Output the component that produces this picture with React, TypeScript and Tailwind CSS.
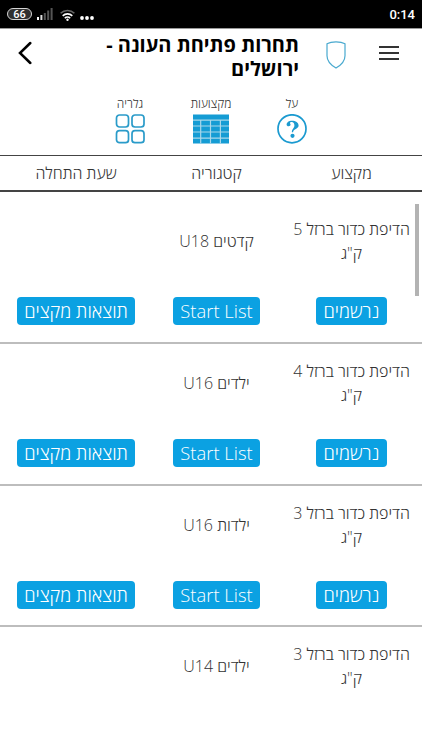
import { useState } from "react";

interface EventRow {
  id: number;
  name: string;
  unit: string;
  category: string;
}

const events: EventRow[] = [
  { id: 1, name: "הדיפת כדור ברזל 5", unit: 'ק"ג', category: "קדטים U18" },
  { id: 2, name: "הדיפת כדור ברזל 4", unit: 'ק"ג', category: "ילדים U16" },
  { id: 3, name: "הדיפת כדור ברזל 3", unit: 'ק"ג', category: "ילדות U16" },
  { id: 4, name: "הדיפת כדור ברזל 3", unit: 'ק"ג', category: "ילדים U14" },
];

const columns = "grid grid-cols-[141px_129px_152px]";

const StatusBar = () => (
  <div dir="ltr" className="flex h-7 shrink-0 items-center bg-black pl-[7px] pr-[7px] text-white font-['Roboto',sans-serif]">
    <div className="flex h-3 w-[25px] items-center justify-center rounded-full border border-[#d5d5d5] bg-[#303030] text-[11px] font-medium leading-none">
      66
    </div>
    <svg className="ml-[5px]" width="16" height="12" viewBox="0 0 16 12">
      <rect x="0" y="9" width="2" height="3" fill="#fff" />
      <rect x="3.4" y="7" width="2" height="5" fill="#ddd" />
      <rect x="6.8" y="5" width="2" height="7" fill="#555" />
      <rect x="10.2" y="2.5" width="2" height="9.5" fill="#555" />
      <rect x="13.6" y="0" width="2" height="12" fill="#555" />
    </svg>
    <svg className="ml-[7px] mt-px" width="15" height="12" viewBox="0 0 15 12" fill="none" strokeWidth="1.6">
      <path d="M.6 4.3a9.8 9.8 0 0 1 13.8 0" stroke="#666" />
      <path d="M2.7 6.9a6.8 6.8 0 0 1 9.6 0" stroke="#fff" />
      <path d="M4.8 9.2a3.8 3.8 0 0 1 5.4 0" stroke="#fff" />
      <circle cx="7.5" cy="10.8" r="1.2" fill="#fff" />
    </svg>
    <svg className="ml-[5px] mt-[7px]" width="14" height="4" viewBox="0 0 14 4" fill="#fff">
      <circle cx="2" cy="2" r="1.9" />
      <circle cx="7" cy="2" r="1.9" />
      <circle cx="12" cy="2" r="1.9" />
    </svg>
    <span className="ml-auto mt-px text-[13px] font-medium leading-none">0:14</span>
  </div>
);

const Header = () => (
  <header className="flex h-[67px] shrink-0 border-t border-[#999] pr-[23px] pl-[18px]">
    <button className="mt-[15px] h-4 w-5" aria-label="תפריט">
      <svg width="20" height="15" viewBox="0 0 20 15" stroke="#333" strokeWidth="2">
        <path d="M0 2h20M0 8h20M0 14h20" />
      </svg>
    </button>
    <svg className="mt-3 mr-[33px]" width="20" height="28" viewBox="0 0 20 28" fill="none" stroke="#49a9cf" strokeWidth="1.2">
      <path d="M1 2.800C5.500.3 14.500.3 19 2.800v12c0 5.400-3.800 9.300-9 12.300C4.800 24.100 1 20.200 1 14.800z" />
    </svg>
    <h1 className="mr-[27px] mt-1 w-[200px] text-xl font-bold leading-6 text-black">
      תחרות פתיחת העונה - ירושלים
    </h1>
    <button className="mr-auto mt-3 h-6 w-[14px]" aria-label="חזרה">
      <svg width="14" height="24" viewBox="0 0 14 24" fill="none" stroke="#000" strokeWidth="2.5">
        <path d="M12.300 2 2 12 12.300 22" strokeLinecap="round" />
      </svg>
    </button>
  </header>
);

const AboutIcon = () => (
  <svg width="31" height="30" viewBox="0 0 31 30">
    <circle cx="15" cy="14.800" r="14" fill="none" stroke="#1b9ad0" strokeWidth="1.700" />
    <path d="M9.600 10.800C9.600 8.200 12 6.700 15 6.700c3.600 0 6.600 1.700 6.600 4.900 0 3.700-5.400 3.200-5.500 6.700h-1.200c-.3-3.700 2.500-3.800 2.500-6.900 0-2.200-.9-3.500-2.700-3.500-1 0-1.700.4-1.700 1 0 .6.600.8.600 1.700 0 1-.8 1.700-1.900 1.700-1.300 0-2.100-.6-2.100-1.500z" fill="#1b9ad0" />
    <circle cx="15.500" cy="21.800" r="2.100" fill="#1b9ad0" />
  </svg>
);

const TableIcon = () => (
  <svg width="36" height="30" viewBox="0 0 36 30">
    <rect y="0.500" width="36" height="29" fill="#159cd4" />
    <path d="M0 6.200h36M0 12h36M0 18h36M0 24.200h36M7.700 6v23.500M17.500 6v23.500M27.400 6v23.500" stroke="#a9d7e9" strokeWidth="1.200" />
  </svg>
);

const GalleryIcon = () => (
  <svg width="30" height="30" viewBox="0 0 30 30" fill="none" stroke="#2a9bc9" strokeWidth="1.700">
    <rect x="1.500" y="1" width="12" height="12" rx="3" />
    <rect x="17" y="1" width="12" height="12" rx="3" />
    <rect x="1.500" y="16.700" width="12" height="12" rx="3" />
    <rect x="17" y="16.700" width="12" height="12" rx="3" />
  </svg>
);

const tabs = [
  { key: "about", label: "על", icon: <AboutIcon /> },
  { key: "events", label: "מקצועות", icon: <TableIcon /> },
  { key: "gallery", label: "גלריה", icon: <GalleryIcon /> },
];

const ResultButton = ({ label }: { label: string }) => (
  <button className="h-7 whitespace-nowrap rounded-[4px] bg-[#0ba1e2] px-[7px] text-[18.4px] font-light leading-7 text-white">
    {label}
  </button>
);

const App = () => {
  const [active, setActive] = useState<string>("events");

  return (
    <div dir="rtl" className="flex h-[750px] w-[422px] flex-col overflow-hidden bg-white text-[#333] font-['Open_Sans',sans-serif]">
      <StatusBar />
      <Header />

      <nav className="flex h-[60px] shrink-0 justify-center">
        {tabs.map((tab) => (
          <button
            key={tab.key}
            onClick={() => setActive(tab.key)}
            aria-pressed={active === tab.key}
            className="flex w-[81px] flex-col items-center text-xs font-light leading-[18px]"
          >
            <span className="mb-[1px]">{tab.label}</span>
            {tab.icon}
          </button>
        ))}
      </nav>

      <div className={`${columns} h-[37px] shrink-0 items-center border-y-2 border-[#444] border-t-[1px] text-center text-base font-light`}>
        <span>מקצוע</span>
        <span>קטגוריה</span>
        <span>שעת התחלה</span>
      </div>

      {/* events list */}
      <div className="relative mt-[10px] h-[500px] overflow-hidden">
        {events.map((event, i) => (
          <div key={event.id} className="h-[141.8px] border-b-2 border-[#bdbdbd] text-base font-light">
            <div className={`${columns} h-[78px] items-center text-center leading-6`}>
              <div>
                <p>{event.name}</p>
                <p>{event.unit}</p>
              </div>
              <p>{event.category}</p>
            </div>
            {i < 3 && (
              <div className={`${columns} mt-[17px] justify-items-center`}>
                <ResultButton label="נרשמים" />
                <ResultButton label="Start List" />
                <ResultButton label="תוצאות מקצים" />
              </div>
            )}
          </div>
        ))}
        <div className="absolute right-[3px] top-[2px] h-[92px] w-1 bg-[#b3b3b3]" />
      </div>
    </div>
  );
};

export default App;
